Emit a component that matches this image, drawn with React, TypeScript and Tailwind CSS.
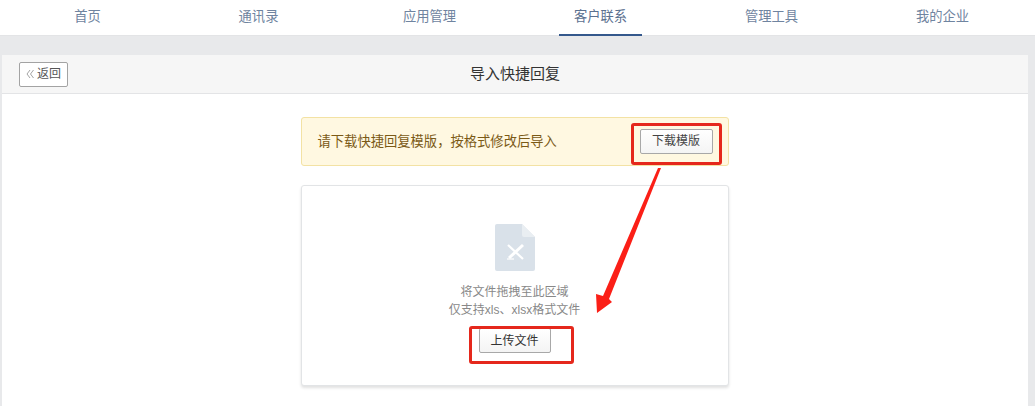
const font = '[font-family:"Liberation_Sans","Noto_Sans_CJK_SC",sans-serif]';

const tabs = ['首页', '通讯录', '应用管理', '客户联系', '管理工具', '我的企业'];

function NavTabs() {
  return (
    <nav className="flex h-9 bg-white pl-[2px] pr-[7px] border-b border-[#e3e4e6]">
      {tabs.map((tab) => (
        <div key={tab} className="flex-1 flex justify-center">
          <a
            className={
              tab === '客户联系'
                ? 'w-[83px] h-9 text-center text-[13.3px] leading-[33px] text-[#5b7190] border-b-[2px] border-[#34588c]'
                : 'w-[83px] text-center text-[13.3px] leading-[33px] text-[#6f84a0]'
            }
          >
            {tab}
          </a>
        </div>
      ))}
    </nav>
  );
}

function FileIcon() {
  return (
    <svg width="40" height="47" viewBox="0 0 40 47" className="block">
      <path d="M2 0H27L40 13V45a2 2 0 0 1-2 2H2a2 2 0 0 1-2-2V2a2 2 0 0 1 2-2Z" fill="#d9e1e9" />
      <path d="M27 0L40 13H29a2 2 0 0 1-2-2Z" fill="#e9eef2" />
      <path d="M13 21L28 35" stroke="#fff" strokeWidth="2.2" fill="none" />
      <path d="M28 21L14 34" stroke="#fff" strokeWidth="3" fill="none" />
      <path d="M12 35H19" stroke="#fff" strokeWidth="1.2" fill="none" />
    </svg>
  );
}

function BackChevrons() {
  return (
    <svg width="8" height="10" viewBox="0 0 8 10" className="mr-[3px]">
      <path d="M4 1L1 5L4 9M7.5 1L4.5 5L7.5 9" stroke="#9a9a9a" strokeWidth="0.9" fill="none" />
    </svg>
  );
}

function Marks() {
  return (
    <>
      <div className="absolute left-[631px] top-[123px] w-[91px] h-[42px] border-[3px] border-[#e5281c] rounded-[3px]" />
      <div className="absolute left-[469px] top-[326px] w-[105px] h-[38px] border-[3px] border-[#e5281c] rounded-[3px]" />
      <svg width="1035" height="406" className="absolute left-0 top-0 pointer-events-none">
        <path d="M661 168L609 299L612 302L597 313L596 294L603 296L658 168Z" fill="#fb1f17" />
      </svg>
    </>
  );
}

export default function App() {
  return (
    <div className={`relative w-[1035px] h-[406px] overflow-hidden bg-[#e8e9eb] ${font}`}>
      <NavTabs />
      <div className="mt-[19px] ml-[2px] mr-[7px] h-[351px] bg-white rounded-t-[2px]">
        <header className="flex items-center h-[39px] bg-[#f6f6f6] border-b border-[#e3e4e6] pl-[17px]">
          <button className="flex items-center justify-center w-[49px] h-[25px] border border-[#a3a3a3] rounded-[2px] bg-white text-[12px] text-[#555]">
            <BackChevrons />
            返回
          </button>
          <h1 className="flex-1 pr-[66px] text-center text-[15px] font-normal text-[#333]">导入快捷回复</h1>
        </header>
        <main className="flex flex-col items-center pt-[23px] pr-[1px]">
          <div className="flex items-center justify-between w-[428px] h-[49px] bg-[#fff8e1] border border-[#f3e2a4] rounded-[3px] pl-[16px] pr-[15px]">
            <span className="text-[13.3px] text-[#7b5a16]">请下载快捷回复模版，按格式修改后导入</span>
            <button className="w-[73px] h-[25px] mt-[-1px] border border-[#a8a8a8] rounded-[2px] bg-gradient-to-b from-white to-[#f4f4f4] text-[12px] text-[#444]">
              下载模版
            </button>
          </div>
          <section className="flex flex-col items-center w-[428px] h-[201px] mt-[19px] pt-[38px] bg-white border border-[#e2e4e6] rounded-[3px] shadow-[0_2px_3px_rgba(0,0,0,0.12)]">
            <FileIcon />
            <p className="mt-[12px] text-center text-[12px] leading-[18px] text-[#888]">
              将文件拖拽至此区域
              <br />
              仅支持xls、xlsx格式文件
            </p>
            <button className="w-[72px] h-[25px] mt-[9px] border border-[#a8a8a8] rounded-[2px] bg-gradient-to-b from-white to-[#f4f4f4] text-[12px] text-[#333]">
              上传文件
            </button>
          </section>
        </main>
      </div>
      <Marks />
    </div>
  );
}
